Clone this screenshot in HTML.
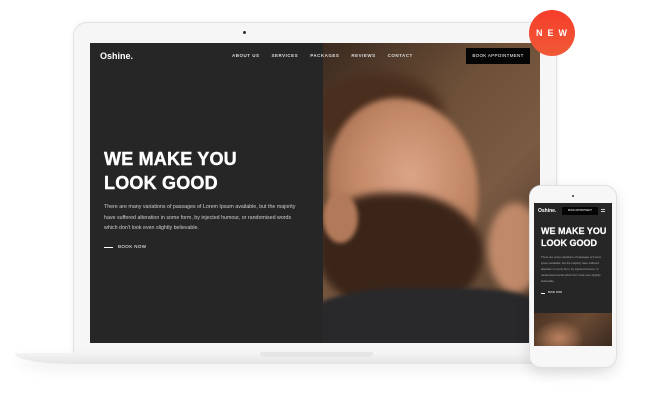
<!DOCTYPE html>
<html><head><style>
*{margin:0;padding:0;box-sizing:border-box}
body{width:650px;height:409px;background:#fff;position:relative;overflow:hidden;font-family:"Liberation Sans",sans-serif}
.abs{position:absolute}
</style></head><body>
<div class="abs" style="left:73px;top:22px;width:484px;height:332px;background:#f6f6f6;border:1px solid #e2e2e2;border-radius:14px 14px 0 0;box-shadow:0 0 6px rgba(0,0,0,.06)"></div>
<div class="abs" style="left:243px;top:31px;width:3px;height:3px;border-radius:50%;background:#333"></div>
<div class="abs" style="left:15px;top:353px;width:590px;height:11px;background:linear-gradient(#f4f4f4,#e4e4e4);border-radius:0 0 40px 60px / 0 0 10px 10px;box-shadow:0 6px 14px rgba(0,0,0,.07)"></div>
<div class="abs" style="left:260px;top:352px;width:113px;height:5px;background:#e6e6e6;border-radius:0 0 4px 4px"></div>
<div class="abs" style="left:90px;top:43px;width:450px;height:300px;background:#262626;overflow:hidden">
  <div class="abs" style="left:233px;top:0;width:217px;height:300px;overflow:hidden;background:linear-gradient(135deg,#3a2a20 0%,#6e5038 35%,#7a5a42 60%,#4a3628 100%)">
    <div class="abs" style="left:-10px;top:30px;width:130px;height:80px;border-radius:50%;background:#4a2e1e;filter:blur(6px)"></div>
    <div class="abs" style="left:5px;top:55px;width:150px;height:170px;border-radius:45% 55% 40% 50%;background:radial-gradient(ellipse at 55% 45%,#dca488 0%,#c48a68 45%,#9a6448 100%);filter:blur(3px)"></div>
    <div class="abs" style="left:-5px;top:150px;width:165px;height:120px;border-radius:40% 50% 50% 50%;background:#3b2519;filter:blur(4px)"></div>
    <div class="abs" style="left:0;top:150px;width:35px;height:50px;border-radius:50%;background:#b27a5a;filter:blur(2px)"></div>
    <div class="abs" style="left:165px;top:160px;width:55px;height:90px;border-radius:50%;background:#c08a6a;filter:blur(4px)"></div>
    <div class="abs" style="left:-20px;top:245px;width:260px;height:80px;border-radius:40% 40% 0 0;background:#29292b;filter:blur(2px)"></div>
  </div>
  <div class="abs" style="left:10px;top:8px;color:#fff;font-weight:bold;font-size:9px">Oshine.</div>
  <div class="abs" style="left:142px;top:10px;color:#ddd;font-size:4.5px;letter-spacing:.5px;font-weight:bold">
   <span style="margin-right:12px">ABOUT US</span><span style="margin-right:12px">SERVICES</span><span style="margin-right:12px">PACKAGES</span><span style="margin-right:12px">REVIEWS</span><span>CONTACT</span></div>
  <div class="abs" style="left:376px;top:5px;width:64px;height:16px;background:#050505;color:#fff;font-size:4.5px;line-height:16px;text-align:center;letter-spacing:.3px">BOOK APPOINTMENT</div>
  <div class="abs" style="left:14px;top:104px;color:#fff;font-weight:bold;font-size:18px;line-height:24px;letter-spacing:.2px;-webkit-text-stroke:.4px #fff">WE MAKE YOU<br>LOOK GOOD</div>
  <div class="abs" style="left:14px;top:159px;width:200px;color:#cfcfcf;font-size:5.3px;line-height:10.5px">There are many variations of passages of Lorem Ipsum available, but the majority have suffered alteration in some form, by injected humour, or randomised words which don't look even slightly believable.</div>
  <div class="abs" style="left:14px;top:204px;width:9px;height:1px;background:#fff"></div>
  <div class="abs" style="left:28px;top:201px;color:#fff;font-size:4.5px;letter-spacing:.4px">BOOK NOW</div>
</div>
<div class="abs" style="left:529px;top:10px;width:46px;height:46px;border-radius:50%;background:linear-gradient(#f53d2a,#f05a36);color:#fff;font-weight:bold;font-size:9px;letter-spacing:5px;text-align:center;line-height:46px;padding-left:4px">NEW</div>
<div class="abs" style="left:529px;top:185px;width:88px;height:183px;background:#f7f7f7;border:1px solid #e0e0e0;border-radius:12px;box-shadow:0 5px 14px rgba(0,0,0,.12)"></div>
<div class="abs" style="left:572px;top:195px;width:2px;height:2px;border-radius:50%;background:#333"></div>
<div class="abs" style="left:534px;top:203px;width:78px;height:143px;background:#262626;overflow:hidden">
  <div class="abs" style="left:4px;top:5px;color:#fff;font-weight:bold;font-size:5px">Oshine.</div>
  <div class="abs" style="left:28px;top:4px;width:36px;height:8px;background:#050505;color:#fff;font-size:2.3px;line-height:8px;text-align:center">BOOK APPOINTMENT</div>
  <div class="abs" style="left:67px;top:6px;width:4px;height:3px;border-top:1px solid #ccc;border-bottom:1px solid #ccc"></div>
  <div class="abs" style="left:7px;top:22px;color:#fff;font-weight:bold;font-size:9px;line-height:12px;-webkit-text-stroke:.2px #fff">WE MAKE YOU<br>LOOK GOOD</div>
  <div class="abs" style="left:7px;top:51px;width:66px;color:#aaa;font-size:2.8px;line-height:6px">There are many variations of passages of Lorem Ipsum available, but the majority have suffered alteration in some form, by injected humour, or randomised words which don't look even slightly believable.</div>
  <div class="abs" style="left:7px;top:90px;width:4px;height:1px;background:#fff"></div>
  <div class="abs" style="left:14px;top:88px;color:#fff;font-size:2.5px">BOOK NOW</div>
  <div class="abs" style="left:0;top:110px;width:78px;height:33px;background:radial-gradient(ellipse 25px 18px at 25px 25px,#b98060,rgba(120,80,50,0)),linear-gradient(135deg,#4a3324,#6b4a33,#3a2a20)"></div>
</div>
</body></html>
